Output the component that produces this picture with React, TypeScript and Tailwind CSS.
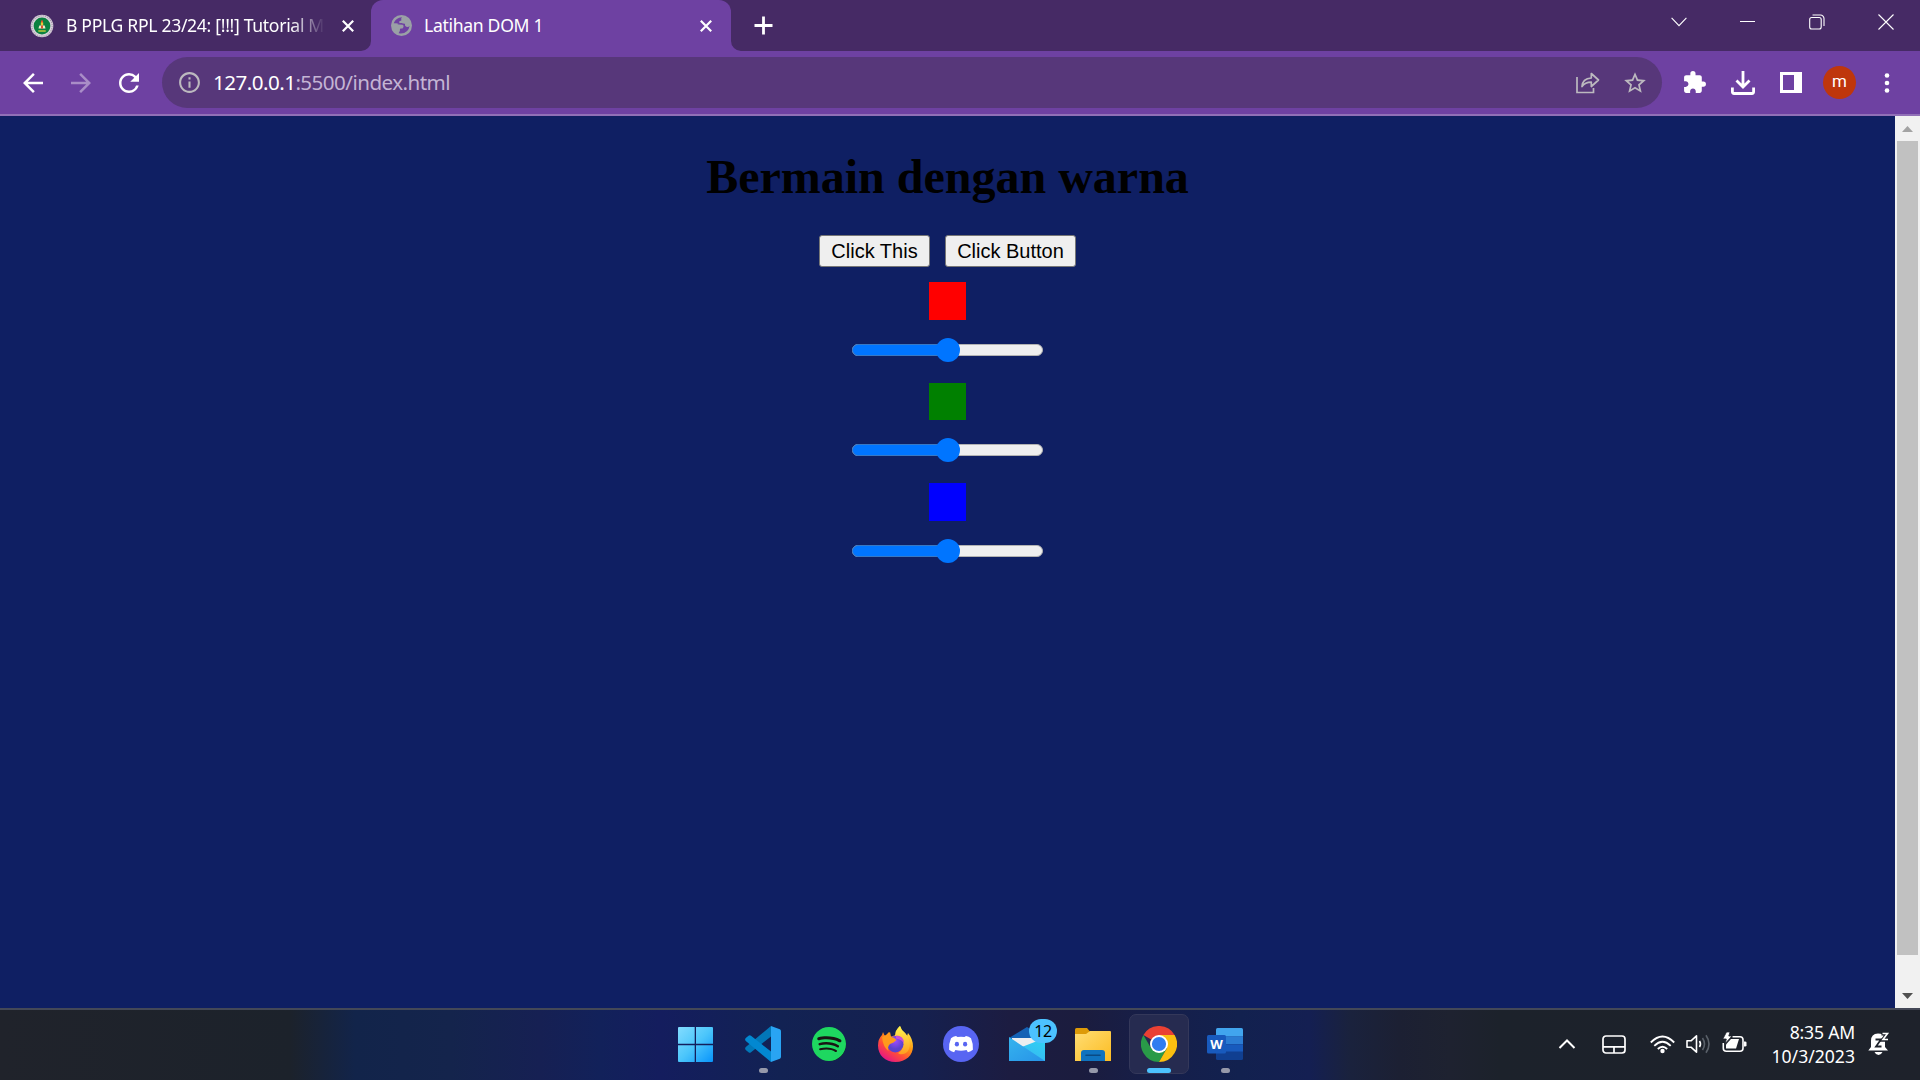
import type { CSSProperties, ReactNode } from 'react';
import { SiSpotify } from 'react-icons/si';
import { MdExtension, MdStarOutline, MdRefresh, MdArrowBack, MdArrowForward, MdInfoOutline } from 'react-icons/md';

const WindowButton = ({ children }: { children: ReactNode }) => (
  <div className="flex h-[43px] w-[69px] items-center justify-center">{children}</div>
);

function TabClose() {
  return (
    <svg width="12" height="12" viewBox="0 0 12 12" stroke="#fff" strokeWidth="2.2" className="shrink-0">
      <path d="M0.8 0.8 11.2 11.2M11.2 0.8 0.8 11.2" />
    </svg>
  );
}

function TabStrip() {
  return (
    <div className="flex h-[51px] bg-[#462a65] text-[17.6px] text-white">
      <div className="flex w-[371px] items-center pl-[30px]">
        <svg width="24" height="24" viewBox="0 0 24 24" className="shrink-0">
          <circle cx="12" cy="12" r="11.3" fill="#d9d3dc" />
          <circle cx="12" cy="12" r="10.2" fill="none" stroke="#a99bae" strokeWidth="1.2" strokeDasharray="1.2 1" />
          <circle cx="12" cy="12" r="8.4" fill="#0b8140" />
          <path d="M11 6.500h2v3h-2z" fill="#e0522c" />
          <path d="M10.800 8.500h2.400v3h-2.400z" fill="#e8c93a" />
          <path d="M9.300 11.500h5.400l.8 3h-7z" fill="#f1ead0" />
          <path d="M11 11.500h2v3h-2z" fill="#e0522c" />
          <path d="M8.300 17h7.400" stroke="#d9d23a" strokeWidth="1.300" />
        </svg>
        <div className="ml-[12px] w-[260px] whitespace-nowrap tracking-[-0.32px] [mask-image:linear-gradient(to_right,black_225px,transparent_259px)]">
          B PPLG RPL 23/24: [!!!] Tutorial M
        </div>
        <div className="ml-[16px] flex"><TabClose /></div>
      </div>
      <div className="relative flex w-[360px] items-center rounded-t-[12px] bg-[#6e41a2] pl-[20px]">
        <svg className="absolute bottom-0 -left-[10px]" width="10" height="10"><path d="M10 0A10 10 0 0 1 0 10H10z" fill="#6e41a2" /></svg>
        <svg className="absolute -right-[10px] bottom-0" width="10" height="10"><path d="M0 0A10 10 0 0 0 10 10H0z" fill="#6e41a2" /></svg>
        <svg width="21" height="21" viewBox="0 0 21 21" className="shrink-0">
          <circle cx="10.500" cy="10.500" r="10.500" fill="#9aa0a6" />
          <path d="M2.700 8.200Q4.800 2.800 11 2.300 9.500 3.800 10.500 5.500L8.300 6.300V8H6.500q-.5 1.500 1.500 1.500l3.500.3q1.500.5 1 2.200l-1 1.500H9.500q-.8.600-.6 2.300l-1.300 2.400 2.200.3q7.600-.4 8.800-7.500-2 1.600-4 .2-1.200-1.300-.3-2.400L11.500 8" fill="#6e41a2" />
          <path d="M10.500 5.500 13 3l4 2.500 2 4.500-2.500 2-2.300-1.800V8.500L11 8.200z" fill="#9aa0a6" />
        </svg>
        <div className="ml-[12px] grow tracking-[-0.32px]">Latihan DOM 1</div>
        <div className="mr-[19px] flex"><TabClose /></div>
      </div>
      <div className="flex items-center pl-[23px]">
        <svg width="19" height="19" viewBox="0 0 19 19" stroke="#fff" strokeWidth="2.800"><path d="M9.500 0.500v18M0.500 9.500h18" /></svg>
      </div>
      <div className="grow" />
      <div className="flex">
        <WindowButton>
          <svg width="16" height="10" viewBox="0 0 16 10" fill="none" stroke="#fff" strokeWidth="1.100"><path d="M.6.8 8 8.600 15.400.8" /></svg>
        </WindowButton>
        <WindowButton><div className="h-px w-[15px] bg-white" /></WindowButton>
        <WindowButton>
          <svg width="16" height="16" viewBox="0 0 16 16" fill="none" stroke="#fff" strokeWidth="1.100">
            <rect x=".7" y="3.500" width="11.500" height="11.500" rx="2" />
            <path d="M3.500 1h8a3.500 3.500 0 0 1 3.500 3.500v7.500" />
          </svg>
        </WindowButton>
        <WindowButton>
          <svg width="16" height="16" viewBox="0 0 16 16" stroke="#fff" strokeWidth="1.100"><path d="M.5.5l15 15M15.500.5l-15 15" /></svg>
        </WindowButton>
      </div>
    </div>
  );
}

function Toolbar() {
  return (
    <div className="flex h-[65px] items-center border-b-2 border-[#9170b7] bg-[#6e41a2] text-white">
      <MdArrowBack size={30} className="ml-[18px]" />
      <MdArrowForward size={30} className="ml-[18px] text-[#a98dc7]" />
      <MdRefresh size={30} className="ml-[18px]" />
      <div className="ml-[18px] flex h-[51px] w-[1500px] items-center rounded-full bg-[#57377a] pl-[15px] text-[20.6px] text-[#c4b4d4]">
        <MdInfoOutline size={25} color="#bcb9bf" />
        <div className="ml-[11px] grow tracking-[-0.54px]">
          <span className="text-white">127.0.0.1</span>:5500/index.html
        </div>
        <svg width="24" height="22" viewBox="0 0 24 22" fill="none" stroke="#bcb9bf" strokeWidth="1.700">
          <path d="M1 5v15.500h16.500V16" />
          <path d="M6 14.500C6.300 9 10 6.300 15.300 6V1.500L22.500 8l-7.200 6.500v-4.300C11 10.200 8 11.500 6 14.500z" strokeLinejoin="round" />
        </svg>
        <MdStarOutline size={26} color="#bcb9bf" className="mr-[14px] ml-[22px]" />
      </div>
      <MdExtension size={25} className="ml-[20px]" />
      <svg width="24" height="24" viewBox="0 0 24 24" className="ml-[24px]" fill="none" stroke="#fff" strokeWidth="2.800">
        <path d="M12 0v15M5.500 9.500 12 16l6.500-6.500M1.400 16.500v4.300q0 1.700 1.700 1.700h17.800q1.700 0 1.700-1.700v-4.300" />
      </svg>
      <svg width="22" height="21" viewBox="0 0 22 21" className="ml-[25px]"><path d="M0 0h22v21H0zM3 3v15h11V3z" fill="#fff" fillRule="evenodd" /></svg>
      <div className="ml-[21px] flex size-[33px] items-center justify-center rounded-full bg-[#bf360c] pb-[2px] font-[Roboto] text-[17px]">m</div>
      <svg width="6" height="20" viewBox="0 0 6 20" className="ml-[28px]" fill="#fff"><circle cx="3" cy="2.500" r="2.300" /><circle cx="3" cy="10" r="2.300" /><circle cx="3" cy="17.500" r="2.300" /></svg>
    </div>
  );
}

const Slider = () => (
  <div className="relative h-[12px] w-[191px] rounded-full border border-[#b2b2b2] bg-[#efefef]">
    <div className="absolute -top-px -left-px h-[12px] w-[96px] rounded-l-full border border-[#3878c4] bg-[#0075ff]" />
    <div className="absolute -top-[7px] left-[83px] size-[24px] rounded-full bg-[#0075ff]" />
  </div>
);

const PageButton = ({ children, className }: { children: ReactNode; className: string }) => (
  <button className={`${className} h-[32px] rounded-[3px] border border-[#767676] bg-[#efefef] font-['Liberation_Sans',sans-serif] text-[20px] leading-[28px] text-black`}>
    {children}
  </button>
);

function Page() {
  return (
    <div className="flex h-[892px]">
      <main className="flex w-[1895px] flex-col items-center bg-[#0f1f63]">
        <h1 className="mt-[33px] font-['Liberation_Serif',serif] text-[48px] leading-[56px] font-bold text-black">Bermain dengan warna</h1>
        <div className="mt-[30px] flex gap-[15px]">
          <PageButton className="w-[111px]">Click This</PageButton>
          <PageButton className="w-[131px]">Click Button</PageButton>
        </div>
        <div className="mt-[15px] h-[38px] w-[37px] bg-[#ff0000]" />
        <div className="mt-[24px]"><Slider /></div>
        <div className="mt-[27px] h-[37px] w-[37px] bg-[#008000]" />
        <div className="mt-[24px]"><Slider /></div>
        <div className="mt-[27px] h-[38px] w-[37px] bg-[#0000ff]" />
        <div className="mt-[24px]"><Slider /></div>
      </main>
      <div className="flex w-[25px] flex-col items-center bg-[#f1f1f1]">
        <svg width="11" height="6" viewBox="0 0 11 6" className="mt-[10px]"><path d="M5.500 0 11 6H0z" fill="#a3a3a3" /></svg>
        <div className="mt-[9px] h-[814px] w-[21px] bg-[#c1c1c1]" />
        <svg width="11" height="6" viewBox="0 0 11 6" className="mt-[38px]"><path d="M0 0h11L5.500 6z" fill="#505050" /></svg>
      </div>
    </div>
  );
}

const taskbarStyle: CSSProperties = {
  background:
    'linear-gradient(to right,#20232b 0px,#1c222b 290px,#12244a 355px,#14244c 450px,#162053 540px,#12215a 600px,#141d5e 660px,#122253 780px,#15204f 920px,#1c1c41 1010px,#1b1c3e 1080px,#151f4b 1170px,#12214f 1240px,#141f52 1310px,#1a223d 1350px,#1c2033 1400px,#1e2230 1450px,#1c222b 1500px,#1e222b 1920px)',
};

function AppSlot({ children, running, active }: { children: ReactNode; running?: boolean; active?: boolean }) {
  return (
    <div className={`relative flex h-[60px] w-[60px] items-center justify-center rounded-[7px] border ${active ? 'border-[#34385a] bg-[#262b50]' : 'border-transparent'}`}>
      {children}
      {running && <div className="absolute bottom-0 h-[5px] w-[9px] rounded-full bg-[#9699aa]" />}
      {active && <div className="absolute bottom-0 h-[5px] w-[24px] rounded-full bg-[#4cc2ff]" />}
    </div>
  );
}

function TaskbarApps() {
  return (
    <div className="flex">
      <div className="mr-[8px]">
        <AppSlot>
          <svg width="35" height="35" viewBox="0 0 35 35">
            <defs><linearGradient id="win" gradientUnits="userSpaceOnUse" x1="0" y1="0" x2="35" y2="35"><stop stopColor="#83dcff" /><stop offset=".5" stopColor="#4cc6fb" /><stop offset="1" stopColor="#0894fb" /></linearGradient></defs>
            <path d="M1 0h15.700v16.700H0V1q0-1 1-1zM18 0h16q1 0 1 1v15.700H18zM0 18.200h16.700V35H1q-1 0-1-1zM18 18.200h17V34q0 1-1 1H18z" fill="url(#win)" />
          </svg>
        </AppSlot>
      </div>
      <div className="flex gap-[6px]">
        <AppSlot running>
          <svg width="36" height="36" viewBox="0 0 36 36">
            <path d="M26 0v10.500L6 26.200q-1.200 1-2.500 0L.8 24q-1.400-1.500 0-3z" fill="#0277b8" />
            <path d="M26 36V25.500L6 9.800q-1.200-1-2.500 0L.8 12q-1.400 1.500 0 3z" fill="#0288d1" />
            <path d="M26 0 34.800 3.300Q36 4 36 5.300v25.400q0 1.300-1.200 2L26 36z" fill="#29a4f3" />
          </svg>
        </AppSlot>
        <AppSlot>
          <div className="flex size-[33px] items-center justify-center rounded-full bg-[#191414]"><SiSpotify size={34} color="#1ed760" className="shrink-0" /></div>
        </AppSlot>
        <AppSlot>
          <svg width="35" height="36" viewBox="0 0 35 36">
            <defs>
              <linearGradient id="ff" x1=".9" y1=".1" x2=".3" y2="1"><stop stopColor="#fff44f" /><stop offset=".4" stopColor="#ff980e" /><stop offset=".7" stopColor="#ff4b3b" /><stop offset="1" stopColor="#e31587" /></linearGradient>
              <radialGradient id="fp" cx=".5" cy=".3"><stop stopColor="#a04bff" /><stop offset="1" stopColor="#5a42ce" /></radialGradient>
              <linearGradient id="fl" x1="0" y1="0" x2="0" y2="1"><stop stopColor="#fff44f" /><stop offset="1" stopColor="#ff9d20" /></linearGradient>
            </defs>
            <path d="M5 6q1 3 2.500 4L12 6l1 4.500L18 9q0-5 4-9 1 4 5 7l2 3 1-3q5 6 5 13.500C35 29 28 36 17.500 36S0 29 0 19.500Q0 13 4 9z" fill="url(#ff)" />
            <path d="M17 10q0-6 5-10 1 4 5 7c4 4 7 12 3 18-3 4-8 4-10 2 6-3 7-10-3-17z" fill="url(#fl)" />
            <circle cx="17.300" cy="18.200" r="8.200" fill="url(#fp)" />
            <path d="M4 11q4-1 7-5l1.500 5q3-.5 6 3l-3 2.500-3.500 1.500q-3 3-1.500 7Q5 21 4 11z" fill="#ff9a1c" />
            <path d="M18 9.500q8 0 8 8-2-4-8-5z" fill="#c64ed8" />
          </svg>
        </AppSlot>
        <AppSlot>
          <svg width="36" height="36" viewBox="0 0 36 36">
            <circle cx="18" cy="18" r="18" fill="#5865f2" />
            <path d="M13 10 14.500 11q3.500-.6 7 0L23 10q2.800.4 5 2.200 2.300 5.300 1.900 11.500-2 1.700-5 2.500l-1.300-2.300q-5.600 1.500-11.200 0L11.100 26.200q-3-.8-5-2.500-.4-6.200 1.900-11.500Q10.200 10.400 13 10z" fill="#fff" />
            <ellipse cx="13.900" cy="18.200" rx="2.100" ry="2.400" fill="#5865f2" /><ellipse cx="22.100" cy="18.200" rx="2.100" ry="2.400" fill="#5865f2" />
          </svg>
        </AppSlot>
        <AppSlot>
          <svg width="36" height="34" viewBox="0 0 36 34">
            <defs>
              <linearGradient id="mail" x1="0" y1="0" x2="1" y2="1"><stop stopColor="#35b4ee" /><stop offset="1" stopColor="#2793e8" /></linearGradient>
              <linearGradient id="flap" x1="1" y1="0" x2=".3" y2="1"><stop stopColor="#2fd3f5" /><stop offset="1" stopColor="#38b4ef" /></linearGradient>
            </defs>
            <path d="M0 11 18 0l18 11v5H0z" fill="#1462b5" />
            <path d="M3 11h30v8L18 25 3 15z" fill="#eceef0" />
            <path d="M36 11v23H0V25z" fill="url(#flap)" />
            <path d="M0 10 36 34H0z" fill="url(#mail)" />
          </svg>
          <div className="absolute top-[4px] left-[31px] flex h-[24px] w-[28px] items-center justify-center rounded-full bg-[#4cc2ff] text-[16px] tracking-[-0.5px] text-black">12</div>
        </AppSlot>
        <AppSlot running>
          <svg width="36" height="33" viewBox="0 0 36 33">
            <defs><linearGradient id="fold" x1="0" y1="0" x2="1" y2="1"><stop stopColor="#ffdd74" /><stop offset="1" stopColor="#fcbc22" /></linearGradient></defs>
            <path d="M0 1.500Q0 0 1.500 0H12l3 3.500V8H0z" fill="#dd9a08" />
            <path d="M0 6h11l4-3h20q1 0 1 1v29H0z" fill="url(#fold)" />
            <path d="M6 33v-8q0-3 3-3h18q3 0 3 3v8z" fill="#0f73bf" /><path d="M11 27.200h14" stroke="#0a4a83" strokeWidth="1.600" strokeLinecap="round" />
          </svg>
        </AppSlot>
        <AppSlot active>
          <svg width="36" height="36" viewBox="0 0 36 36">
            <path d="M18 18 2.400 9A18 18 0 0 1 33.600 9z" fill="#ea4033" />
            <path d="M2.400 9A18 18 0 0 0 18 36l7.800-13.500L18 20 10.200 22.500z" fill="#299a48" />
            <path d="M18 9h15.600A18 18 0 0 1 18 36l7.800-13.500z" fill="#fbbf10" />
            <circle cx="18" cy="18" r="9" fill="#fff" /><circle cx="18" cy="18" r="7.100" fill="#2f7cf0" />
          </svg>
        </AppSlot>
        <AppSlot running>
          <div className="relative">
            <svg width="36" height="33" viewBox="0 0 36 33">
              <path d="M9 8.500V1.500Q9 0 10.500 0H34.500Q36 0 36 1.500v7z" fill="#41a5ee" /><path d="M9 8.200h27v8H9z" fill="#2b7cd3" /><path d="M9 16.200h27V24H9z" fill="#185abd" /><path d="M9 23.500h27v7q0 1.500-1.500 1.500h-24Q9 32 9 30.500z" fill="#103f91" />
              <rect y="7" width="19" height="18.500" rx="1.500" fill="#185abd" />
            </svg>
            <div className="absolute top-[7px] left-0 w-[19px] text-center text-[13px] leading-[18px] font-bold text-white">W</div>
          </div>
        </AppSlot>
      </div>
    </div>
  );
}

function Tray() {
  return (
    <div className="flex items-center text-white">
      <svg width="18" height="12" viewBox="0 0 18 12" fill="none" stroke="#fff" strokeWidth="2"><path d="M1.500 10 9 2.500 16.500 10" /></svg>
      <svg width="24" height="19" viewBox="0 0 24 19" className="ml-[26px]" fill="none" stroke="#fff" strokeWidth="1.700"><rect x="1" y="1" width="22" height="17" rx="3" /><path d="M1 11.800h22M12 11.800V18" /></svg>
      <svg width="25" height="19" viewBox="0 0 25 19" className="ml-[24px]" fill="none" stroke="#fff" strokeWidth="1.800"><path d="M.8 7.500q11.700-12 23.400 0M4.300 10.800q8.200-8 16.400 0M7.800 14q4.700-4.500 9.400 0" /><circle cx="12.500" cy="16" r="2.200" fill="#fff" stroke="none" /></svg>
      <svg width="26" height="20" viewBox="0 0 26 20" className="ml-[11px]" fill="none" stroke="#fff" strokeWidth="1.600">
        <path d="M1 6.800h4L10.500 1.800v16.400L5 13.200H1z" strokeLinejoin="round" /><path d="M13.500 7q2 3 0 6" />
        <path d="M16.500 4q4 6 0 12M20 1.200q6 8.800 0 17.600" stroke="#596069" />
      </svg>
      <svg width="25" height="21" viewBox="0 0 25 21" className="mb-[3px] ml-[10px]">
        <path d="M10.500 4.800H18q3 0 3 3v8.400q0 3-3 3H4.300q-3 0-3-3V11" fill="none" stroke="#fff" strokeWidth="1.600" />
        <path d="M22 9.500h1q1.500 0 1.500 1.200v2.600q0 1.200-1.500 1.200h-1z" fill="#fff" />
        <path d="M4 16.500v-4l5-5.500h8l-3 9.500z" fill="#fff" />
        <path d="M4.500 0h3.500L6.800 4H10L3.200 11.500 4.300 7H.8z" fill="#fff" stroke="#1e222b" strokeWidth=".8" />
      </svg>
      <div className="w-[108px] text-right text-[17.6px] leading-[24px]"><div className="tracking-[-0.2px]">8:35 AM</div><div>10/3/2023</div></div>
      <svg width="22" height="24" viewBox="0 0 22 24" className="ml-[13px]">
        <path d="M3 15V9q0-7.500 7-7.500 5.500 0 7 4V15l3 3.500H.3z" fill="#fff" /><path d="M6.500 20h8q-1.300 3-4 3t-4-3z" fill="#fff" />
        <path d="M7.500 7.500h5.500l-5 7h5.500" fill="none" stroke="#1e222b" strokeWidth="1.800" />
        <path d="M13.500 1.500h6.500l-5 6.300h5.500" fill="none" stroke="#1e222b" strokeWidth="4" /><path d="M14.500 1.500h5l-4.500 6h5" fill="none" stroke="#fff" strokeWidth="1.600" />
      </svg>
    </div>
  );
}

export default function App() {
  return (
    <div className="flex h-[1080px] w-[1920px] flex-col overflow-hidden bg-[#462a65] font-['Noto_Sans','Open_Sans',sans-serif]">
      <TabStrip />
      <Toolbar />
      <Page />
      <div className="flex h-[72px] items-center border-t-2 border-[#444857] pb-[2px] pl-[665px]" style={taskbarStyle}>
        <TaskbarApps />
        <div className="grow" />
        <div className="mr-[30px]"><Tray /></div>
      </div>
    </div>
  );
}
